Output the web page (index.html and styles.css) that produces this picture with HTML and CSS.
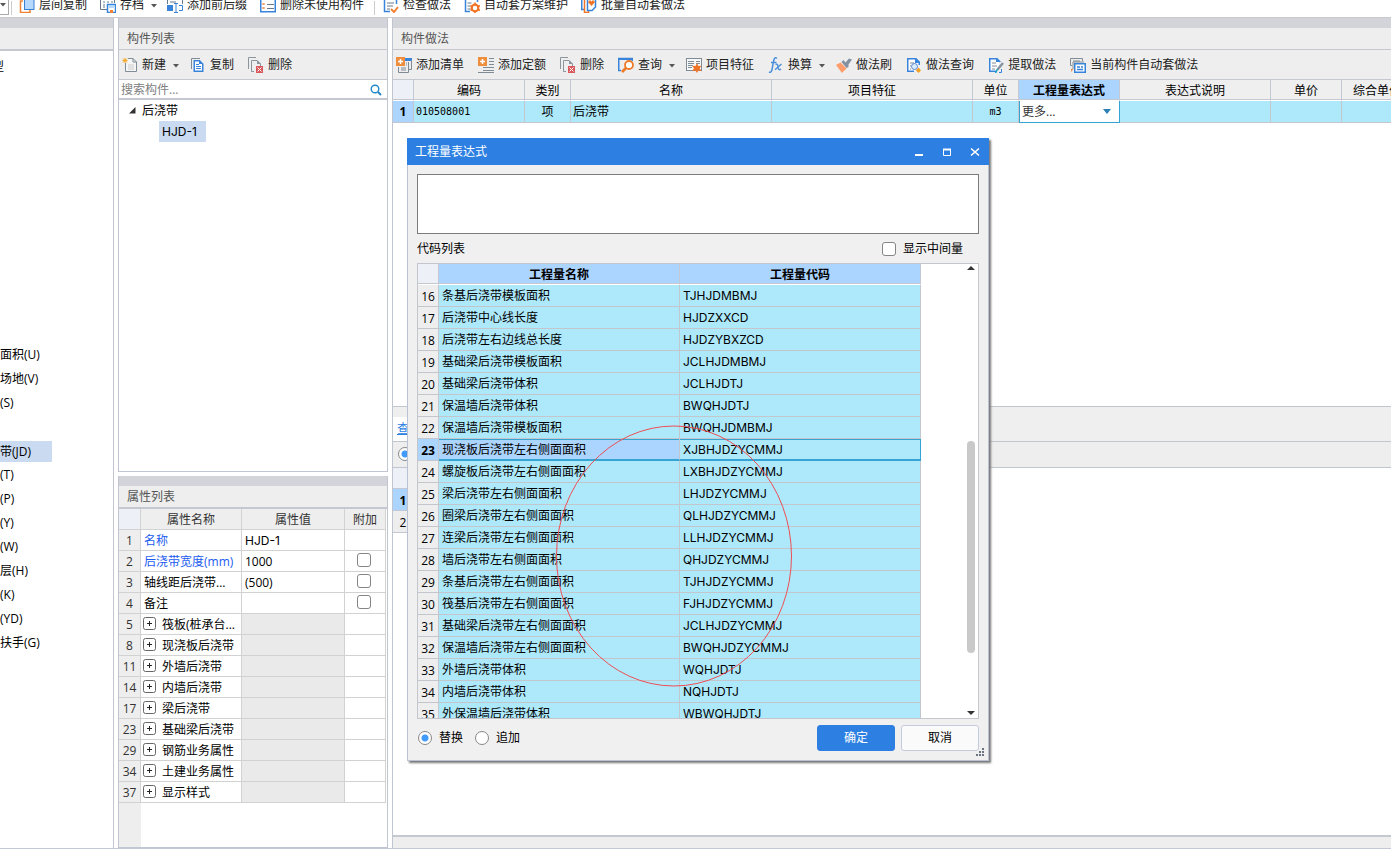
FILE: index.html
```html
<!DOCTYPE html>
<html lang="zh-CN">
<head>
<meta charset="utf-8">
<title>构件做法</title>
<link rel="stylesheet" href="styles.css">
</head>
<body>
<svg class="defs" aria-hidden="true">
  <symbol id="i-del" viewBox="0 0 16 16"><path d="M.5 12V.5H8" fill="none" stroke="#8a959e"/><path d="M6 14.500H3.500V3.500H9L12.500 7V9" fill="none" stroke="#8a959e"/><path d="M9 3V7H13z" fill="#8a959e"/><rect x="8" y="9" width="7" height="7" fill="#d8585c"/><path d="M9.500 10.500l4 4M13.500 10.500l-4 4" stroke="#fff"/></symbol>
  <symbol id="i-down" viewBox="0 0 6 4"><path d="M0 0H6L3 3.500z" fill="#555"/></symbol>
  <symbol id="i-plus" viewBox="0 0 13 13"><rect x=".5" y=".5" width="12" height="12" rx="2" fill="#fff" stroke="#666"/><path d="M4 6.500H9M6.500 4V9" stroke="#222"/></symbol>
</svg>
<div class="app">
  <header class="topbar">
    <button class="combo-end" aria-label="展开"><svg width="6" height="4"><use href="#i-down"/></svg></button>
    <span class="sep"></span>
    <button class="tool"><svg class="ico" viewBox="0 0 16 16"><path d="M4 4H1.500V15.500H11V13" fill="none" stroke="#f08236" stroke-width="1.500"/><rect x="5.500" y="2" width="9.500" height="10.500" fill="#b5d8fc" stroke="#3d80cf"/></svg>层间复制</button>
    <button class="tool"><svg class="ico" viewBox="0 0 16 16"><path d="M7 12.500H.5V1.500H14.500V6" fill="none" stroke="#68788a"/><path d="M3 5h2m2 0h2m2 0h2M3 8h2M3 10h2" stroke="#68788a"/><rect x="7.500" y="7.500" width="8" height="8" fill="#fff" stroke="#3884da" stroke-width="1.500"/><path d="M9 8h5v3H9z" fill="#b5d8fc"/><path d="M10 13h3v3h-3z" fill="#f08236"/></svg>存档<svg class="caret"><use href="#i-down"/></svg></button>
    <button class="tool"><svg class="ico" viewBox="0 0 16 16"><path d="M.5 7V1.500H15.500V7" fill="none" stroke="#68788a"/><path d="M3 5h6" stroke="#68788a"/><path d="M0 8h6v6H0z" fill="#3884da"/><path d="M12 8.500h3.500v5H12" fill="none" stroke="#3884da"/><path d="M9 6.500v9M7 6.500h4M7 15.500h4" stroke="#3884da"/></svg>添加前后缀</button>
    <button class="tool"><svg class="ico" viewBox="0 0 16 16"><rect x=".75" y="1.750" width="14.500" height="13" fill="#fff" stroke="#3884da" stroke-width="1.500"/><path d="M2.500 6l2 2m0-2l-2 2M2.500 10l2 2m0-2l-2 2" stroke="#f08236"/><path d="M7 7.500h7M7 11.500h7" stroke="#68788a"/></svg>删除未使用构件</button>
    <span class="sep tall"></span>
    <button class="tool"><svg class="ico" viewBox="0 0 16 16"><path d="M13.500 7V1.500H1.500V14.500H7" fill="none" stroke="#3884da" stroke-width="1.500"/><path d="M4 6h7M4 9h6M4 12h3" stroke="#68788a"/><path d="M8 12l3 3 4-5" fill="none" stroke="#f08236" stroke-width="2"/></svg>检查做法</button>
    <button class="tool"><svg class="ico" viewBox="0 0 16 16"><path d="M13.500 5V1.500H1.500V14.500H6" fill="none" stroke="#3884da" stroke-width="1.500"/><path d="M3.500 6h4M3.500 9h3M3.500 12h3" stroke="#68788a"/><circle cx="11" cy="11" r="3.300" fill="#fff" stroke="#f07427" stroke-width="2.200"/><path d="M11 5.500v2M11 14.500v2M6.500 8.500l1.500 1M14 12.500l2 1M6.500 13.500l1.500-1M14 9.500l2-1" stroke="#f07427" stroke-width="1.600"/></svg>自动套方案维护</button>
    <button class="tool"><svg class="ico" viewBox="0 0 16 16"><path d="M.75 1V12.500H3" fill="none" stroke="#3884da" stroke-width="1.500"/><path d="M3.500 1V15.500H7.500V13" fill="none" stroke="#f07427" stroke-width="1.500"/><path d="M6.500 1V13.500H11L14.500 10V1" fill="#fff" stroke="#3884da" stroke-width="1.500"/><path d="M7 5l3.500 4L14 5l-2-2-1.500 1.500L9 3z" fill="#f07427"/></svg>批量自动套做法</button>
  </header>
  <main class="main">
    <aside class="nav">
      <div class="band"></div>
      <div class="head"></div>
      <ul class="nav-list">
        <li class="cut">型</li>
        <li class="first">面积(U)</li><li>场地(V)</li><li>(S)</li><li></li><li><span class="picked">带(JD)</span></li><li>(T)</li><li>(P)</li><li>(Y)</li><li>(W)</li><li>层(H)</li><li>(K)</li><li>(YD)</li><li>扶手(G)</li>
      </ul>
    </aside>
    <div class="middle">
      <section class="panel comps">
        <div class="band"></div>
        <h2 class="head">构件列表</h2>
        <div class="bar">
          <button class="tool"><svg class="ico" viewBox="0 0 16 16"><path d="M3.500 6V14.500H14.500V5L11 1.500H6" fill="#f5f5f5" stroke="#7f8c95"/><path d="M11 1.500V5H14.500" fill="none" stroke="#7f8c95"/><path d="M6 8h6M6 10h6M6 12h6" stroke="#ccc"/><path d="M3 1v5M.5 3.500h5M1 1.500l4 4M5 1.500l-4 4" stroke="#f5a623"/></svg>新建<svg class="caret"><use href="#i-down"/></svg></button>
          <button class="tool"><svg class="ico" viewBox="0 0 16 16"><path d="M1.500 12V1.500H10" fill="none" stroke="#7f8c95"/><path d="M4.250 3.750H9.500L12.750 7V14.250H4.250z" fill="#fff" stroke="#3884da" stroke-width="1.500"/><path d="M6 7.500h3M6 9.500h5M6 11.500h5" stroke="#3884da"/><path d="M9 3.500V7H13z" fill="#3884da"/></svg>复制</button>
          <button class="tool"><svg class="ico"><use href="#i-del"/></svg>删除</button>
        </div>
        <label class="search"><input type="text" placeholder="搜索构件..." aria-label="搜索构件"><svg width="12" height="12" viewBox="0 0 12 12"><circle cx="5" cy="5" r="3.800" fill="none" stroke="#2487c8" stroke-width="1.400"/><path d="M8 8l3 3" stroke="#2487c8" stroke-width="2"/></svg></label>
        <ul class="tree">
          <li><svg width="7" height="7"><path d="M0 6.500H6.500V0z" fill="#333"/></svg>后浇带</li>
          <li class="leaf"><span class="code">HJD-1</span></li>
        </ul>
      </section>
      <section class="panel props">
        <div class="band"></div>
        <h2 class="head thick">属性列表</h2>
        <div class="props-body">
        <table class="ptable">
          <colgroup><col class="c-idx"><col><col class="c-val"><col class="c-ext"></colgroup>
          <thead><tr><th></th><th>属性名称</th><th>属性值</th><th>附加</th></tr></thead>
          <tbody>
            <tr><th>1</th><td class="blue">名称</td><td class="code">HJD-1</td><td></td></tr>
            <tr><th>2</th><td class="blue">后浇带宽度(mm)</td><td>1000</td><td><input type="checkbox" class="chk" aria-label="附加 后浇带宽度"></td></tr>
            <tr><th>3</th><td>轴线距后浇带...</td><td>(500)</td><td><input type="checkbox" class="chk" aria-label="附加 轴线距"></td></tr>
            <tr><th>4</th><td>备注</td><td></td><td><input type="checkbox" class="chk" aria-label="附加 备注"></td></tr>
            <tr class="grp"><th>5</th><td><svg><use href="#i-plus"/></svg>筏板(桩承台...</td><td></td><td></td></tr>
            <tr class="grp"><th>8</th><td><svg><use href="#i-plus"/></svg>现浇板后浇带</td><td></td><td></td></tr>
            <tr class="grp"><th>11</th><td><svg><use href="#i-plus"/></svg>外墙后浇带</td><td></td><td></td></tr>
            <tr class="grp"><th>14</th><td><svg><use href="#i-plus"/></svg>内墙后浇带</td><td></td><td></td></tr>
            <tr class="grp"><th>17</th><td><svg><use href="#i-plus"/></svg>梁后浇带</td><td></td><td></td></tr>
            <tr class="grp"><th>23</th><td><svg><use href="#i-plus"/></svg>基础梁后浇带</td><td></td><td></td></tr>
            <tr class="grp"><th>29</th><td><svg><use href="#i-plus"/></svg>钢筋业务属性</td><td></td><td></td></tr>
            <tr class="grp"><th>34</th><td><svg><use href="#i-plus"/></svg>土建业务属性</td><td></td><td></td></tr>
            <tr class="grp"><th>37</th><td><svg><use href="#i-plus"/></svg>显示样式</td><td></td><td></td></tr>
          </tbody>
        </table>
        </div>
      </section>
    </div>
    <section class="work">
      <div class="band"></div>
      <h2 class="head">构件做法</h2>
      <div class="bar">
        <button class="tool"><svg class="ico" viewBox="0 0 16 16"><path d="M9 1h7v3H9z" fill="#3884da"/><path d="M15.500 3V12.500H13M2.500 10V15.500H12.500V5" fill="none" stroke="#7f8c95"/><path d="M5 11h5M5 13h5M10 6h1M10 8h1" stroke="#7f8c95"/><path d="M0 0h9v9H0z" fill="#ee8d3c"/><path d="M2 4.500h5M4.500 2v5" stroke="#fff" stroke-width="1.500"/></svg>添加清单</button>
        <button class="tool"><svg class="ico" viewBox="0 0 16 16"><path d="M11 1.500h5M11 4.500h5M11 7.500h5M5 10.500h11M5 13.500h11M0 15.500h16" stroke="#7f8c95"/><path d="M0 0h9v9H0z" fill="#ee8d3c"/><path d="M2 4.500h5M4.500 2v5" stroke="#fff" stroke-width="1.500"/></svg>添加定额</button>
        <button class="tool"><svg class="ico"><use href="#i-del"/></svg>删除</button>
        <button class="tool"><svg class="ico" viewBox="0 0 16 16"><path d="M3 13.500H.75V1.500H14.250V4" fill="none" stroke="#3884da" stroke-width="1.500"/><path d="M0 1h15v2H0z" fill="#3884da"/><circle cx="11" cy="8" r="4" fill="#fff" stroke="#ee7a28" stroke-width="1.800"/><path d="M8 11l-4 4" stroke="#ee7a28" stroke-width="2.600"/></svg>查询<svg class="caret"><use href="#i-down"/></svg></button>
        <button class="tool"><svg class="ico" viewBox="0 0 16 16"><rect x=".5" y="1.500" width="15" height="12" fill="#f8f8f8" stroke="#7f8c95"/><path d="M2 4.500h6M2 6.500h6M2 8.500h5M2 10.500h4M10 4.500h4M10 6.500h4" stroke="#7f8c95"/><path d="M11 6l1.400 3 3.200-.3-1.900 2.500 1.900 3-3.400-.6L11 16l-1.600-2.500-3.200.7 1.800-3L6 8.700l3.500.3z" fill="#f07427"/></svg>项目特征</button>
        <button class="tool"><svg class="ico" viewBox="0 0 16 16"><path d="M9 1.200C6.500 0 6 2 5.500 4.500L4 12.500C3.500 15 2.500 15.800 1 15M3 5.500H8.500" fill="none" stroke="#4a8fd9" stroke-width="1.500"/><path d="M7.500 7.500c2-1 2 0 2.500 2.500s1 3.500 3 2.200M13.500 7L7 12.800" fill="none" stroke="#4a8fd9" stroke-width="1.400"/></svg>换算<svg class="caret"><use href="#i-down"/></svg></button>
        <button class="tool"><svg class="ico" viewBox="0 0 16 16"><path d="M0 8l4.500-2.500 6 6L6 16z" fill="#ff9d6a"/><path d="M5.500 5l2-2 2 2.500L13 1.500l3 1L12.500 7.500V10l-2 1z" fill="#8391a0"/></svg>做法刷</button>
        <button class="tool"><svg class="ico" viewBox="0 0 16 16"><path d="M13.250 8V5L10 1.750H1.750V14.250H8" fill="#fff" stroke="#3884da" stroke-width="1.500"/><path d="M9 1V6H13.500z" fill="#3884da"/><path d="M4 6h4M4 9h1M4 12h1" stroke="#7f8c95"/><circle cx="8.500" cy="9.500" r="3" fill="#d8ecff" stroke="#5b83c8"/><path d="M12.500 10.500l2.500 3-2.500 2.500-2.500-2.500z" fill="#f5a01e"/></svg>做法查询</button>
        <button class="tool"><svg class="ico" viewBox="0 0 16 16"><path d="M12.250 5L9 1.750H1.750V14.250H8" fill="#fff" stroke="#3884da" stroke-width="1.500"/><path d="M8 1V5H12.500z" fill="#3884da"/><path d="M4 6h4M4 9h5M4 12h3" stroke="#7f8c95"/><path d="M15 6L9.500 12.500" stroke="#8391a0" stroke-width="2.400"/><path d="M9.500 12l-2 4" stroke="#1d9fc0" stroke-width="1.600"/><path d="M13.500 12v3.500H11" fill="none" stroke="#3884da"/></svg>提取做法</button>
        <button class="tool"><svg class="ico" viewBox="0 0 16 16"><path d="M2 8.500H.5V1.500H12.500V4M3 12v-7h11" fill="none" stroke="#7f8c95"/><path d="M3 4h7" stroke="#7f8c95"/><rect x="4.750" y="6.750" width="10.500" height="8.500" fill="#fff" stroke="#3884da" stroke-width="1.500"/><path d="M7 10h3M7 12.500h6M11 10h2" stroke="#3884da" stroke-width="1.500"/><path d="M1 12h2l-1.500 3z" fill="#f07427"/></svg>当前构件自动套做法</button>
      </div>
      <div class="upper">
        <table class="wtable">
          <colgroup><col class="w-idx"><col class="w-code"><col class="w-s"><col class="w-l"><col class="w-l"><col class="w-s"><col class="w-expr"><col class="w-desc"><col class="w-price"><col class="w-price"></colgroup>
          <thead><tr><th></th><th>编码</th><th>类别</th><th>名称</th><th>项目特征</th><th>单位</th><th class="on">工程量表达式</th><th>表达式说明</th><th>单价</th><th>综合单价</th></tr></thead>
          <tbody><tr><th>1</th><td class="mono">010508001</td><td class="mid">项</td><td>后浇带</td><td></td><td class="mid mono">m3</td><td class="edit"><select aria-label="工程量表达式"><option>更多...</option></select><svg width="8" height="5"><path d="M0 0H8L4 5z" fill="#2d7fb8"/></svg></td><td></td><td></td><td></td></tr></tbody>
        </table>
      </div>
      <div class="tabs"><a href="#query">查询</a></div>
      <div class="opts"><input type="radio" class="rad" name="src" checked aria-label="查询"></div>
      <div class="lower">
        <table class="mini"><tbody><tr><th></th></tr><tr><th class="on">1</th></tr><tr><th>2</th></tr></tbody></table>
      </div>
      <div class="foot"></div>
    </section>
  </main>
</div>

<div class="dialog" role="dialog" aria-label="工程量表达式">
  <div class="title"><span>工程量表达式</span>
    <button aria-label="最小化"><svg width="10" height="10"><path d="M1 8h8" stroke="#fff" stroke-width="2"/></svg></button>
    <button aria-label="最大化"><svg width="10" height="10"><path d="M1.500 8.500V2.500H8.500V8.500z" fill="none" stroke="#fff"/><path d="M1 2.500h8" stroke="#fff" stroke-width="2"/></svg></button>
    <button aria-label="关闭"><svg width="10" height="10"><path d="M1 1.500l8 7M9 1.500l-8 7" stroke="#fff" stroke-width="1.600"/></svg></button>
  </div>
  <div class="dbody">
    <textarea aria-label="表达式"></textarea>
    <div class="lrow"><span>代码列表</span><label><input type="checkbox" class="chk">显示中间量</label></div>
    <div class="list">
      <table class="ctable">
        <colgroup><col class="w-idx"><col class="c-half"><col class="c-half"></colgroup>
        <thead><tr><th></th><th>工程量名称</th><th>工程量代码</th></tr></thead>
        <tbody>
          <tr><th>16</th><td>条基后浇带模板面积</td><td>TJHJDMBMJ</td></tr>
          <tr><th>17</th><td>后浇带中心线长度</td><td>HJDZXXCD</td></tr>
          <tr><th>18</th><td>后浇带左右边线总长度</td><td>HJDZYBXZCD</td></tr>
          <tr><th>19</th><td>基础梁后浇带模板面积</td><td>JCLHJDMBMJ</td></tr>
          <tr><th>20</th><td>基础梁后浇带体积</td><td>JCLHJDTJ</td></tr>
          <tr><th>21</th><td>保温墙后浇带体积</td><td>BWQHJDTJ</td></tr>
          <tr><th>22</th><td>保温墙后浇带模板面积</td><td>BWQHJDMBMJ</td></tr>
          <tr class="cur"><th>23</th><td>现浇板后浇带左右侧面面积</td><td>XJBHJDZYCMMJ</td></tr>
          <tr><th>24</th><td>螺旋板后浇带左右侧面面积</td><td>LXBHJDZYCMMJ</td></tr>
          <tr><th>25</th><td>梁后浇带左右侧面面积</td><td>LHJDZYCMMJ</td></tr>
          <tr><th>26</th><td>圈梁后浇带左右侧面面积</td><td>QLHJDZYCMMJ</td></tr>
          <tr><th>27</th><td>连梁后浇带左右侧面面积</td><td>LLHJDZYCMMJ</td></tr>
          <tr><th>28</th><td>墙后浇带左右侧面面积</td><td>QHJDZYCMMJ</td></tr>
          <tr><th>29</th><td>条基后浇带左右侧面面积</td><td>TJHJDZYCMMJ</td></tr>
          <tr><th>30</th><td>筏基后浇带左右侧面面积</td><td>FJHJDZYCMMJ</td></tr>
          <tr><th>31</th><td>基础梁后浇带左右侧面面积</td><td>JCLHJDZYCMMJ</td></tr>
          <tr><th>32</th><td>保温墙后浇带左右侧面面积</td><td>BWQHJDZYCMMJ</td></tr>
          <tr><th>33</th><td>外墙后浇带体积</td><td>WQHJDTJ</td></tr>
          <tr><th>34</th><td>内墙后浇带体积</td><td>NQHJDTJ</td></tr>
          <tr><th>35</th><td>外保温墙后浇带体积</td><td>WBWQHJDTJ</td></tr>
        </tbody>
      </table>
      <div class="scroll"><svg width="8" height="4"><path d="M0 4H8L4 0z" fill="#333"/></svg><div class="track"><div class="thumb"></div></div><svg width="8" height="4"><path d="M0 0H8L4 4z" fill="#333"/></svg></div>
    </div>
    <div class="actions">
      <label><input type="radio" class="rad" name="mode" checked>替换</label>
      <label><input type="radio" class="rad" name="mode">追加</label>
      <button class="btn ok">确定</button><button class="btn">取消</button>
    </div>
  </div>
  <svg class="grip" width="9" height="9"><path d="M6 0h2v2H6zM3 3h2v2H3zM6 3h2v2H6zM0 6h2v2H0zM3 6h2v2H3zM6 6h2v2H6z" fill="#6c7480"/></svg>
  <svg class="mark" width="238" height="262"><ellipse cx="119" cy="131" rx="117.500" ry="130" fill="none" stroke="#ee4e55"/></svg>
</div>
</body>
</html>
```

FILE: styles.css
```css
* { box-sizing: border-box; }
html, body { height: 100%; }
body { margin: 0; overflow: hidden; background: #fff; position: relative; color: #000; font: 12px/16px "Open Sans", "Noto Sans CJK SC", sans-serif; }
button, input, select, textarea { font: inherit; color: inherit; }
button { border: 0; background: none; padding: 0; }
ul { list-style: none; margin: 0; padding: 0; }
h2 { margin: 0; font-size: 12px; font-weight: 400; }
.defs { position: absolute; width: 0; height: 0; }
.app { display: flex; flex-direction: column; height: 100%; }

.topbar { display: flex; align-items: flex-end; gap: 13px; height: 18px; padding-bottom: 2px; border-bottom: 1px solid #c9c9ce; overflow: hidden; flex: none; }
.tool { display: flex; align-items: center; gap: 4px; height: 20px; color: #222; white-space: nowrap; flex: none; }
.ico { width: 16px; height: 16px; flex: none; }
.caret { width: 6px; height: 4px; margin: 2px -3px 0 3px; }
.combo-end { display: flex; align-items: center; width: 9px; height: 20px; border: solid #a9a9a9; border-width: 0 1px 1px 0; margin-right: -11px; flex: none; }
.sep { width: 1px; height: 14px; background: #ccc; margin-right: -5px; flex: none; }
.topbar .tool { margin-left: -1px; margin-right: 1px; }
.sep.tall { margin: 0 -4px; }

.main { display: flex; flex: 1; min-height: 0; gap: 4px; border-bottom: 1px solid #c3c8d4; }
.band { height: 10px; background: #d3d4da; flex: none; }
.head { height: 23px; padding: 3px 8px; background: #eee; color: #555; border-bottom: 2px solid #c5c8ce; flex: none; }
.nav { width: 114px; border-right: 1px solid #c1c5cf; overflow: hidden; flex: none; }
.nav-list { padding-top: 4px; }
.nav-list li { display: flex; align-items: center; height: 24px; white-space: nowrap; }
.nav-list .cut { text-indent: -8px; }
.nav-list .first { margin-top: 264px; }
.picked { width: 52px; line-height: 21px; background: #c9daf1; }

.middle { display: flex; flex-direction: column; width: 270px; gap: 4px; flex: none; }
.panel { display: flex; flex-direction: column; border: 1px solid #c1c5cf; border-top: 0; }
.comps { flex: 1; min-height: 0; }
.comps .head, .work .head { height: 22px; border-bottom-width: 1px; }
.bar { display: flex; align-items: center; gap: 14px; height: 30px; padding: 0 3px; background: #eee; border-bottom: 1px solid #c5c8ce; flex: none; }
.search { display: flex; align-items: center; height: 20px; padding: 1px 5px 0 2px; border-bottom: 2px solid #c5c8ce; }
.search input { flex: 1; min-width: 0; border: 0; padding: 0; outline: 0; }
.search input::placeholder { color: #808080; }
.tree li { display: flex; align-items: center; gap: 6px; height: 21px; padding-left: 10px; }
.tree .leaf { padding-left: 40px; }
.leaf span { width: 47px; height: 21px; padding-left: 3px; line-height: 21px; background: #c9daf1; }
.code, .ctable td:last-child { font-family: Inter, "Open Sans", sans-serif; }

.props { height: 372px; flex: none; }
.props-body { flex: 1; background: linear-gradient(90deg, #eee 22px, #fff 22px); }
table { border-collapse: separate; border-spacing: 0; table-layout: fixed; }
th, td { padding: 0; overflow: hidden; white-space: nowrap; font-weight: 400; }
.ptable { width: 267px; }
.c-idx { width: 22px; } .c-val { width: 103px; } .c-ext { width: 41px; }
.ptable th, .ptable td { height: 21px; padding-top: 2px; border: solid #d2d2d2; border-width: 0 1px 1px 0; }
.ptable th { background: #eee; color: #333; }
.ptable thead th:first-child { background: #edf1f7; }
.ptable td { padding-left: 3px; background: #fff; line-height: 16px; }
.ptable td:last-child { padding: 0 2px 0 0; text-align: center; }
.ptable .blue { color: #1c5cf0; }
.ptable .grp td:nth-child(3) { background: #eaeaea; }
.ptable .grp td:nth-child(2) { padding-left: 2px; }
.ptable td svg { width: 13px; height: 13px; margin-right: 6px; vertical-align: -1px; }
.chk { appearance: none; width: 14px; height: 14px; margin: 0; border: 1px solid #858585; border-radius: 3px; background: #fff; vertical-align: top; }
.rad { appearance: none; width: 14px; height: 14px; margin: 0; border: 1px solid #888; border-radius: 50%; background: #fff; }
.rad:checked { background: radial-gradient(circle, #429bfa 3px, #fff 4px); }

.work { display: flex; flex-direction: column; flex: 1; min-width: 0; border-left: 1px solid #c1c5cf; overflow: hidden; }
.upper { height: 327px; border-bottom: 1px solid #c1c5cf; overflow: hidden; flex: none; }
.wtable { width: 1020px; }
.w-idx { width: 21px; } .w-code { width: 111px; } .w-s { width: 46px; } .w-l { width: 201px; } .w-expr { width: 101px; } .w-desc { width: 151px; } .w-price { width: 71px; }
.wtable thead th, .ctable thead th { height: 21px; padding-top: 2px; background: #efefef; border-right: 1px solid #c3c8d4; border-bottom: 1px solid #fff; box-shadow: inset 0 -1px #c5c8ce; }
.wtable thead th:first-child, .ctable thead th:first-child { background: #edf1f7; }
.wtable thead th.on { background: #abd4ff; font-weight: 700; }
.wtable tbody > tr > *, .ctable tbody > tr > * { height: 22px; border: solid #c3c6cc; border-width: 0 1px 1px 0; background: #aee9fb; }
.wtable td { padding-left: 2px; }
.wtable tbody > tr > th { background: #abd4ff; font-weight: 700; }
.wtable .mid { text-align: center; padding: 0; }
.wtable .mono { font-family: "DejaVu Sans Mono", monospace; font-size: 10px; }
.wtable tbody td.edit { position: relative; padding-left: 1px; background: #fff; border-color: #35a4d2; box-shadow: inset 1px 0 #35a4d2; }
.edit select { appearance: none; display: block; width: 100%; height: 20px; padding: 0 2px; border: 0; background: none; color: #333; }
.edit svg { position: absolute; right: 8px; top: 8px; pointer-events: none; }
.tabs { height: 35px; padding-top: 10px; background: #efefef; border-bottom: 1px solid #c1c5cf; flex: none; }
.tabs a { display: inline-block; height: 24px; padding: 0 4px; line-height: 24px; background: #fff; color: #2b80e2; }
.opts { height: 26px; padding: 5px; background: #eee; border-bottom: 1px solid #c1c5cf; flex: none; }
.lower { flex: 1; min-height: 0; overflow: hidden; }
.mini th { width: 21px; height: 22px; padding-top: 2px; background: #eee; border: solid #c3c8d4; border-width: 0 1px 1px 0; }
.mini tr:first-child th { height: 21px; background: #edf1f7; }
.mini th.on { background: #abd4ff; font-weight: 700; }
.foot { height: 13px; background: #eee; border-top: 2px solid #c5c8ce; flex: none; }

.dialog { position: absolute; left: 407px; top: 138px; width: 582px; background: #f0f0f0; border: 1px solid #bac2d3; border-top: 0; box-shadow: 2px 2px 2px #777; }
.title { display: flex; align-items: center; gap: 18px; height: 27px; margin: 0 -1px; padding: 0 9px 0 8px; background: #2d7fe1; color: #fff; }
.title span { flex: 1; }
.title button { display: flex; }
.dbody { padding: 9px; }
textarea { display: block; width: 100%; height: 60px; border: 1px solid #7b7b7b; background: #fff; resize: none; }
.lrow { display: flex; align-items: center; justify-content: space-between; height: 29px; padding-right: 16px; }
label { display: flex; align-items: center; gap: 7px; }
.list { display: flex; justify-content: space-between; height: 456px; border: 1px solid #c3c6cc; background: #fff; overflow: hidden; }
.ctable { width: 503px; flex: none; align-self: flex-start; }
.c-half { width: 241px; }
.ctable thead th { background: #abd4ff; font-weight: 700; }
.ctable tbody > tr > th { padding-top: 2px; background: #eee; }
.ctable td { padding-left: 3px; }
.ctable tbody > .cur > th { background: #abd4ff; font-weight: 700; }
.ctable tbody > .cur > td { padding-top: 1px; border-bottom: 2px solid #35a4d2; box-shadow: inset 0 1px #35a4d2; }
.ctable tbody > .cur > td:nth-child(2) { background: #abd4ff; }
.ctable tbody > .cur > td:last-child { border-right-color: #35a4d2; }
.scroll { display: flex; flex-direction: column; align-items: center; justify-content: space-between; width: 14px; padding: 2px 0 3px; }
.track { flex: 1; padding-top: 171px; }
.thumb { width: 8px; height: 212px; border-radius: 4px; background: #c9c9c9; }
.actions { display: flex; align-items: center; gap: 6px; padding-top: 6px; }
.actions label { margin: 0 5px 0 1px; }
.btn { width: 78px; height: 26px; border: 1px solid #c3cadb; border-radius: 3px; background: #fafafa; }
.btn.ok { margin-left: auto; background: #2d7fe1; border-color: #2d7fe1; color: #fff; }
.grip { position: absolute; right: 3px; bottom: 3px; }
.mark { position: absolute; left: 147px; top: 287px; pointer-events: none; }
```
